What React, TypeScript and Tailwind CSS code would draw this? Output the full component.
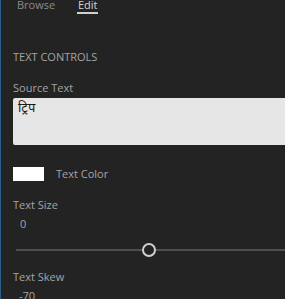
export default function App() {
  return (
    <div
      className="h-[299px] w-[285px] overflow-hidden border-l border-[#2f5c8f] bg-[#232323] text-[11px] leading-[13px] text-[#a3a3a3]"
      style={{ fontFamily: '"Open Sans", "Noto Sans", sans-serif' }}
    >
      {/* tabs */}
      <div className="-mt-[2px] flex h-[19px] pl-[16px]">
        <div className="w-[60px] text-[#8c8c8c]">Browse</div>
        <div className="flex flex-col items-start">
          <span className="px-[1px] text-[#d4d4d4]">Edit</span>
          <span className="mt-[1px] h-[2px] w-[21px] bg-[#cfcfcf]" />
        </div>
      </div>

      <div className="pl-[12px]">
        <div className="mt-[33px]">TEXT CONTROLS</div>

        <div className="mt-[18px]">Source Text</div>
        <div
          className="mt-[4px] h-[47px] w-[290px] rounded-[2px] bg-[#e6e6e6] px-[5px] pt-[1px] text-[13px] leading-[16px] text-[#1a1a1a]"
          style={{ fontFamily: '"Noto Sans", sans-serif' }}
        >
          ट्रिप
        </div>

        <div className="mt-[22px] flex items-start">
          <div className="h-[14px] w-[31px] bg-white" />
          <div className="ml-[12px]">Text Color</div>
        </div>

        <div className="mt-[17px]">Text Size</div>
        <div className="mt-[6px] pl-[7px]">0</div>

        <div className="relative mt-[13px] h-[14px]">
          <div className="absolute left-[3px] right-0 top-[6px] h-[2px] bg-[#4f4f4f]" />
          <div className="absolute left-[129px] top-0 h-[14px] w-[14px] rounded-full border-2 border-[#cfcfcf] bg-[#232323]" />
        </div>

        <div className="mt-[13px]">Text Skew</div>
        <div className="mt-[6px] pl-[6px]">-70</div>
      </div>
    </div>
  );
}
